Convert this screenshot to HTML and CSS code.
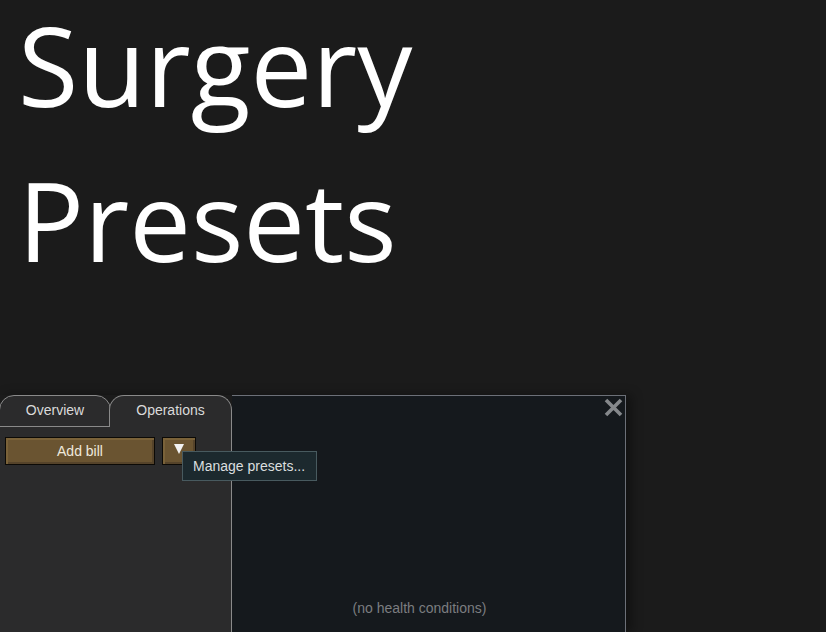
FILE: index.html
```html
<!DOCTYPE html>
<html>
<head>
    <meta http-equiv="Content-Type" content="text/html; charset=utf-8">
    <title>Surgery Presets</title>
    <link rel="stylesheet" href="styles.css">
</head>
<body>
    <h1 class="title">
        <span class="title-line">Surgery</span>
        <span class="title-line">Presets</span>
    </h1>
    <div class="window">
        <div class="sidebar">
            <div class="tabs">
                <div class="tab tab-overview">Overview</div>
                <div class="tab tab-active">Operations</div>
            </div>
            <div class="panel">
                <div class="bill-row">
                    <button class="btn btn-add">Add bill</button>
                    <button class="btn btn-arrow"><span class="arrow"></span></button>
                    <div class="tooltip">Manage presets...</div>
                </div>
            </div>
        </div>
        <div class="main">
            <svg class="close" width="19" height="19" viewBox="0 0 19 19">
                <path d="M2 2 L17 17 M17 2 L2 17" stroke="#85888b" stroke-width="3.6" fill="none"/>
            </svg>
            <p class="empty">(no health conditions)</p>
        </div>
    </div>
</body>
</html>
```

FILE: styles.css
```css
body {
    margin: 0;
    padding: 0;
    background-color: #1b1b1b;
    font-family: "Liberation Sans", Arial, sans-serif;
    overflow: hidden;
}
.title {
    font-family: "Open Sans", sans-serif;
    font-weight: 400;
    font-size: 110px;
    color: #ffffff;
    margin: 0;
    padding-left: 18px;
    height: 395px;
}
.title-line {
    display: block;
    line-height: 129px;
}
.title-line + .title-line {
    margin-top: 26px;
}
.window {
    display: flex;
    width: 626px;
    height: 237px;
    box-shadow: 6px 0 10px rgba(0, 0, 0, 0.35);
}
.sidebar {
    width: 232px;
    display: flex;
    flex-direction: column;
}
.tabs {
    display: flex;
    height: 32px;
}
.tab {
    box-sizing: border-box;
    height: 32px;
    border: 1px solid #8a8a8a;
    border-radius: 15px 15px 0 0;
    background-color: #2b2b2c;
    color: #dadada;
    font-size: 14px;
    text-align: center;
    line-height: 28px;
}
.tab-overview {
    width: 112px;
    margin-left: -1px;
}
.tab-active {
    width: 123px;
    margin-left: -2px;
    border-bottom: none;
    position: relative;
    z-index: 1;
}
.panel {
    flex: 1;
    background-color: #2b2b2c;
    border-right: 1px solid #8a8a8a;
    padding: 10px 0 0 5px;
}
.bill-row {
    position: relative;
    display: flex;
    gap: 7px;
}
.btn {
    box-sizing: border-box;
    height: 28px;
    border: 1px solid #0c0a06;
    background-color: #6a5431;
    box-shadow: inset 2px 2px 0 #7a6239, inset -2px -2px 0 #55432a;
    color: #efe9dc;
    font-family: "Liberation Sans", Arial, sans-serif;
    font-size: 14px;
    padding: 0;
}
.btn-add {
    width: 150px;
}
.btn-arrow {
    width: 34px;
    display: flex;
    align-items: center;
    justify-content: center;
}
.arrow {
    width: 0;
    height: 0;
    border-left: 5px solid transparent;
    border-right: 5px solid transparent;
    border-top: 10px solid #f2f2f2;
    margin-top: -4px;
}
.tooltip {
    position: absolute;
    left: 177px;
    top: 14px;
    box-sizing: border-box;
    width: 135px;
    height: 30px;
    background-color: #1c292e;
    border: 1px solid #485a5f;
    color: #dadedf;
    font-size: 14px;
    line-height: 28px;
    padding-left: 10px;
    z-index: 2;
}
.main {
    flex: 1;
    position: relative;
    background-color: #15191d;
    border-top: 1px solid #6c7078;
    border-right: 1px solid #6c7078;
    display: flex;
    flex-direction: column;
    justify-content: flex-end;
    align-items: center;
    padding: 0 18px 15px 0;
}
.close {
    position: absolute;
    top: 2px;
    right: 2px;
}
.empty {
    margin: 0;
    color: #7b7d80;
    font-size: 14px;
    line-height: 17px;
}
```
